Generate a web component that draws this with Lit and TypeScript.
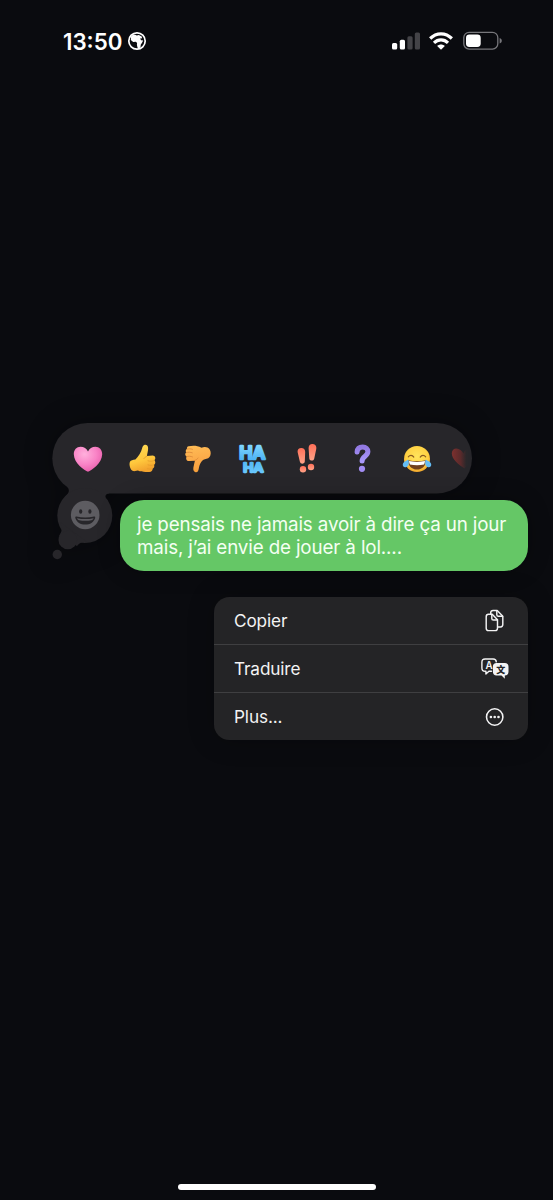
import { LitElement, html, css } from "lit";
import { customElement } from "lit/decorators.js";

const glyphs = {
  globe: html`<svg width="20" height="20" viewBox="0 0 20 20">
    <circle cx="10" cy="10" r="8.2" fill="none" stroke="#fff" stroke-width="1.7"/>
    <path fill="#fff" d="M3.500 6 6 3.500l2.200.2 1.600.8 2-.6 2.900 1.600.4 1.700-2 .3 1 1.700 2.100.3-1.300 2.600-1.100 1.400-.3 2.600-1.600 1.600-1.500-1.300-.5-2.900.2-1.600-1.300-1.200-2.600.3-2.400-2.100.2-2z"/>
  </svg>`,
  signal: html`<svg width="28" height="18" viewBox="0 0 28 18">
    <rect x="0" y="11" width="5.2" height="6.4" rx="1.5" fill="#fff"/>
    <rect x="7.8" y="7.8" width="5.2" height="9.6" rx="1.5" fill="#fff"/>
    <rect x="15.4" y="4.3" width="5.2" height="13.1" rx="1.5" fill="#434347"/>
    <rect x="22.8" y="0.4" width="5.2" height="17" rx="1.5" fill="#434347"/>
  </svg>`,
  wifi: html`<svg width="24" height="18" viewBox="0 0 25 18" preserveAspectRatio="none">
    <g fill="none" stroke="#fff" stroke-width="3.3">
      <path d="M1.2 6.5C7.6.2 17.4.2 23.8 6.5"/>
      <path d="M5.2 10.900c4.2-4 10.4-4 14.6 0"/>
    </g>
    <path fill="#fff" d="M12.5 17.8 8.500 13.900c2.300-2 5.700-2 8 0z"/>
  </svg>`,
  battery: html`<svg width="40" height="20" viewBox="0 0 40 20">
    <rect x=".8" y="1.300" width="34" height="16.800" rx="5.300" fill="none" stroke="#77777b" stroke-width="1.300"/>
    <rect x="3" y="3.500" width="14.700" height="12.400" rx="3.400" fill="#fff"/>
    <path d="M36.600 7v5.500c1.300-.5 2.200-1.500 2.200-2.750S37.900 7.500 36.600 7z" fill="#77777b"/>
  </svg>`,
  heart: html`<svg width="30" height="28" viewBox="0 0 30 28">
    <defs><radialGradient id="p" cx=".38" cy=".3" r=".75"><stop offset="0" stop-color="#ffb0dc"/><stop offset=".55" stop-color="#f983c6"/><stop offset="1" stop-color="#e85baa"/></radialGradient></defs>
    <path fill="url(#p)" d="M15 26.800C11.500 25.500 1 18.500.8 9.300.7 4.800 3.700 1.700 7.500 1.700c3.400 0 6.200 2 7.500 4.700 1.300-2.700 4.100-4.700 7.500-4.700 3.800 0 6.800 3.100 6.700 7.600C29 18.500 18.500 25.500 15 26.800z"/>
  </svg>`,
  up: html`<svg width="28" height="30" viewBox="0 0 28 30">
    <defs><linearGradient id="u" x1="0" y1="0" x2=".3" y2="1"><stop offset="0" stop-color="#ffdc57"/><stop offset=".65" stop-color="#ffc83d"/><stop offset="1" stop-color="#f3a42e"/></linearGradient></defs>
    <path fill="url(#u)" d="M15.200 1.100c1.800-.8 3.800.4 3.900 2.800.1 2.900-.8 5.400-1.200 8l5.800-.3c2.400 0 3.600 3.200 1.700 4.700 1.400 1.500 1.200 3.600-.4 4.500.8 1.700.1 3.400-1.500 3.900.2 1.900-1 3.100-3.200 3.200-4.400.2-8 .3-11.400-1.300l-2.800.5c-2.200.2-3.800-.7-4.800-3.200-1-2.600-1-5-.2-6.400.8-1.400 2.700-1.600 5.300-2.100 3.100-2.700 5.700-6.800 6.800-11.300.3-1.300 1-2.600 2-3z"/>
    <path fill="none" stroke="#e39a2a" stroke-width=".8" stroke-linecap="round" d="M19 16.800c2.100.6 4.100.6 6.200-.2M19 20.900c2 .6 4.100.6 5.900 0M18.500 24.800c1.700.5 3.400.5 5 0M17.900 12.300c-1.500.5-2.500 1.300-3 2.300"/>
  </svg>`,
  down: html`<svg width="28" height="30" viewBox="0 0 28 30">
    <defs><linearGradient id="d" x1="0" y1="0" x2=".2" y2="1"><stop offset="0" stop-color="#ffbe57"/><stop offset=".6" stop-color="#fbaa49"/><stop offset="1" stop-color="#f6a03c"/></linearGradient></defs>
    <path fill="url(#d)" d="M4.500 2.300C9 1.200 13 1.400 17.500 3.700c2-.9 4.200-1 6-.2 2.200 1 3.400 3.600 3.200 6.100-.2 3-1.600 4.800-4.200 5.200-2.300.4-4 1.200-5.300 3.200-1.600 2.300-2.100 4.600-2.500 7-.3 2.300-1.600 3.700-3.200 3.200-1.900-.5-2.500-2.300-2.100-4.700.4-2.500 1.100-4.600 1.500-6.800l-5.700.4c-2.700.1-3.900-2.700-2.400-4.600C.9 11.500.8 9.500 2.100 8.400 1.400 7 1.700 5.600 3 5c-.3-1.300.3-2.400 1.500-2.700z"/>
    <path fill="none" stroke="#d98637" stroke-width=".8" stroke-linecap="round" d="M3 5.100c2-.5 3.600-.4 5.400.2M2.300 8.600c2-.6 4.100-.5 6 .2M2.600 12.600c2-.6 4.100-.5 5.900.3M10.700 16.400c1.700-.6 2.700-1.300 3.300-2.400"/>
  </svg>`,
  haha: html`<svg width="30" height="32" viewBox="0 0 30 32">
    <defs><linearGradient id="h" gradientUnits="userSpaceOnUse" x1="0" y1="1" x2="0" y2="31"><stop offset="0" stop-color="#83d8ff"/><stop offset=".5" stop-color="#4fb4f4"/><stop offset="1" stop-color="#6cc9fd"/></linearGradient></defs>
    <g font-family="Inter, sans-serif" font-weight="500" fill="url(#h)" stroke="url(#h)" stroke-width="2.700" stroke-linejoin="round" stroke-linecap="round">
      <text x="1.200" y="16.200" font-size="17.600" textLength="26" lengthAdjust="spacingAndGlyphs">HA</text>
      <text x="5.200" y="29.200" font-size="11.800" stroke-width="2.300" textLength="20" lengthAdjust="spacingAndGlyphs">HA</text>
    </g>
  </svg>`,
  bang: html`<svg width="24" height="32" viewBox="0 0 24 32">
    <defs><linearGradient id="b" x1="0" y1="0" x2="0" y2="1"><stop offset="0" stop-color="#ff6f58"/><stop offset="1" stop-color="#ffa489"/></linearGradient></defs>
    <g fill="url(#b)">
      <path d="M1.600 9C1.300 6.500 2.900 4.900 5.300 4.900s4 1.600 3.900 4.100l-.4 9.500c-.2 2.700-4.400 2.900-4.900.2z"/>
      <circle cx="7" cy="26.300" r="3.200"/>
      <path d="M12.600 5c.1-2.700 1.800-4.200 4.300-3.900 2.500.3 3.800 2.200 3.400 4.700l-2.100 9.900c-.6 2.600-4.700 2.400-4.900-.3z"/>
      <circle cx="15" cy="24" r="3.200"/>
    </g>
  </svg>`,
  question: html`<svg width="20" height="32" viewBox="0 0 20 32">
    <defs><linearGradient id="q" x1="0" y1="0" x2="0" y2="1"><stop offset="0" stop-color="#9279e2"/><stop offset="1" stop-color="#a998fa"/></linearGradient></defs>
    <path fill="none" stroke="url(#q)" stroke-width="5" stroke-linecap="round" stroke-linejoin="round" d="M5.100 9C5.400 5.700 7.800 4.100 10.700 4.100c3.200 0 5.200 1.700 5.200 4.500 0 4.700-5.800 4.500-5.800 9.400"/>
    <circle cx="10" cy="25.800" r="3.100" fill="#a28cf3"/>
  </svg>`,
  joy: html`<svg width="30" height="28" viewBox="0 0 30 28">
    <defs><radialGradient id="j" cx=".5" cy=".4" r=".6"><stop offset="0" stop-color="#ffe45c"/><stop offset=".7" stop-color="#ffd142"/><stop offset="1" stop-color="#f0a52d"/></radialGradient></defs>
    <circle cx="15" cy="14" r="13" fill="url(#j)"/>
    <g fill="none" stroke="#8a5a20" stroke-width="1.100" stroke-linecap="round"><path d="M6.300 11.800c1.500-2 4.100-2 5.500.3M18.200 12.100c1.400-2.300 4-2.300 5.500-.3"/></g>
    <path fill="#70401c" d="M6 15.200c5.500 1.300 12.500 1.300 18 0 0 5.500-3.600 9.300-9 9.300s-9-3.800-9-9.300z"/>
    <path fill="#fff" d="M7 16.100c5 1.100 11 1.100 16 0-.1 1.300-.4 2.300-.9 3.300-4.400 1-9.800 1-14.200 0-.5-1-.8-2-.9-3.300z"/>
    <path fill="#64bdf5" d="M6.300 14.500c1.200 3.500.3 7-2.300 7.700C1.500 22.700.1 20.600 1 18.500c.8-2 3.400-2.700 5.300-4zM23.700 14.500c-1.200 3.500-.3 7 2.300 7.700 2.500.5 3.900-1.600 3-3.700-.8-2-3.400-2.700-5.300-4z"/>
  </svg>`,
  darkHeart: html`<svg width="20" height="24" viewBox="0 0 20 24">
    <defs><linearGradient id="k"><stop offset="0" stop-color="#7d302e"/><stop offset=".55" stop-color="#5a2a2b"/><stop offset=".9" stop-color="#29272a"/></linearGradient></defs>
    <path fill="url(#k)" d="M13.500 21.500C8 18 .7 12.500.8 6.300.9 3.200 3 1.300 5.500 1.400c2.800.1 5.500 2.300 7 5 .5-2 1.900-3.700 4.300-4.400v16z"/>
  </svg>`,
  copy: html`<svg width="30" height="24" viewBox="0 0 30 24">
    <g fill="none" stroke="#f3f3f4" stroke-width="1.450" stroke-linejoin="round" stroke-linecap="round">
      <path d="M7.500 5.300h3.700l5.300 5.500v8.400c0 1.600-.8 2.400-2.300 2.400H7.500c-1.500 0-2.300-.8-2.300-2.400V7.700c0-1.600.8-2.400 2.300-2.400z"/>
      <path d="M10.800 5.500v3.900c0 1.100.5 1.600 1.600 1.600h3.900"/>
      <path d="M9.700 4.900V3.800c0-1.500.8-2.300 2.300-2.300h4.200l5.600 5.700v8.300c0 1.600-.8 2.400-2.300 2.400h-2.700"/>
      <path d="M15.800 1.800v3.900c0 1.100.5 1.600 1.600 1.600h4.100"/>
    </g>
  </svg>`,
  translate: html`<svg width="30" height="24" viewBox="0 -.6 30 24">
    <path fill="none" stroke="#f3f3f4" stroke-width="1.400" stroke-linejoin="round" stroke-linecap="round" d="M15.300 4.300c-.1-1.900-1.100-2.900-3.200-2.900H4.100C1.900 1.400.9 2.500.9 4.700v5.700c0 2.200 1 3.300 3.200 3.300h.8v2.700l3-2.700h2.600"/>
    <text x="8" y="11.200" text-anchor="middle" font-family="Inter, sans-serif" font-size="9.800" font-weight="600" fill="#f3f3f4">A</text>
    <path fill="#f3f3f4" d="M15.600 5.500h8.200c2.400 0 3.700 1.300 3.700 3.700v5c0 2.400-1.300 3.700-3.700 3.700v3.300L20.500 17.900h-4.900c-2.400 0-3.700-1.300-3.700-3.700v-5c0-2.400 1.300-3.700 3.700-3.700z"/>
    <text x="19.700" y="15.200" text-anchor="middle" font-family="'Noto Sans CJK SC', sans-serif" font-size="9" font-weight="900" fill="#242426">文</text>
  </svg>`,
  more: html`<svg width="30" height="24" viewBox="0 0 30 24">
    <circle cx="13.700" cy="12" r="8.200" fill="none" stroke="#f3f3f4" stroke-width="1.550"/>
    <g fill="#f3f3f4"><circle cx="9.900" cy="12" r="1.300"/><circle cx="13.700" cy="12" r="1.300"/><circle cx="17.500" cy="12" r="1.300"/></g>
  </svg>`,
};

@customElement("status-bar")
class StatusBar extends LitElement {
  static styles = css`
    :host { display: flex; height: 82px; box-sizing: border-box; padding: 0 50px 0 63px; align-items: center; justify-content: space-between; }
    .side { display: flex; align-items: center; }
    .time { font-size: 22.3px; font-weight: 580; letter-spacing: 0; margin-right: 5px; }
    .right { gap: 9px; }
    .battery { margin-left: 1px; }
    svg { display: block; }
  `;
  render() {
    return html`<div class="side"><span class="time">13:50</span>${glyphs.globe}</div>
      <div class="side right">${glyphs.signal}${glyphs.wifi}<span class="battery">${glyphs.battery}</span></div>`;
  }
}

@customElement("reaction-picker")
class ReactionPicker extends LitElement {
  static styles = css`
    :host { display: block; position: relative; width: 420px; height: 71px; }
    .cloud { position: absolute; left: -2px; top: 0; overflow: visible; filter: drop-shadow(0 0 14px rgba(0,0,0,.3)); }
    .row { position: relative; height: 71px; box-sizing: border-box; display: grid; grid-template-columns: repeat(7, 54.900px) 26px; padding-left: 8.500px; align-items: center; overflow: hidden; }
    .cell { display: grid; place-items: center; }
    .cell:last-child { justify-items: end; }
    .cell svg { display: block; }
  `;
  render() {
    const list = [glyphs.heart, glyphs.up, glyphs.down, glyphs.haha, glyphs.bang, glyphs.question, glyphs.joy, glyphs.darkHeart];
    return html`<svg class="cloud" width="424" height="142" viewBox="0 0 424 142">
        <g fill="#27262a">
          <rect x="2.300" y="0" width="419.700" height="70.500" rx="35.250"/>
          <path d="M16 62c4 5 4 7-1 12l15 4h28c-4-4-3-7 1-7.500V62z"/>
          <circle cx="34.800" cy="92.500" r="27.500"/>
          <path d="M10 99c3 7 2 9-1 14l18 10c3-4 6-4 10-4z"/>
          <circle cx="17.800" cy="117" r="9.300"/>
          <circle cx="7.300" cy="131.500" r="4.700"/>
        </g>
        <circle cx="35.200" cy="92" r="14.300" fill="#5d5c61"/>
        <g fill="#27262a">
          <ellipse cx="30.700" cy="88.500" rx="1.600" ry="2.300"/><ellipse cx="39.900" cy="88.500" rx="1.600" ry="2.300"/>
          <path d="M26.500 93.500c5.500 1.400 12 1.400 17.500 0 .9 0 1.400.5 1.200 1.400-1.400 4.300-5.200 6.600-9.900 6.600s-8.700-2.300-10-6.600c-.2-.9.300-1.400 1.200-1.400z"/>
        </g>
        <path fill="#5d5c61" d="M27 95.200c5.300 1.200 11.200 1.200 16.600 0-.5 1.200-1.100 1.700-2.200 2-4 .8-8.300.8-12.200 0-1.100-.3-1.700-.8-2.200-2z"/>
      </svg>
      <div class="row">${list.map((g) => html`<span class="cell">${g}</span>`)}</div>`;
  }
}

@customElement("context-menu")
class ContextMenu extends LitElement {
  static styles = css`
    :host { display: block; width: 314px; height: 144px; border-radius: 15.500px; background: #242426; overflow: hidden; }
    .item { display: flex; height: 48px; box-sizing: border-box; padding: 0 17px 0 20px; align-items: center; justify-content: space-between; font-size: 17.200px; letter-spacing: -0.120px; color: #f3f3f4; }
    .item:first-child { height: 47px; }
    .item + .item { border-top: 1px solid #3f3f41; }
    svg { display: block; }
  `;
  render() {
    return html`<div class="item"><span>Copier</span>${glyphs.copy}</div>
      <div class="item"><span>Traduire</span>${glyphs.translate}</div>
      <div class="item"><span>Plus...</span>${glyphs.more}</div>`;
  }
}

@customElement("app-root")
class AppRoot extends LitElement {
  static styles = css`
    :host { display: flex; flex-direction: column; height: 1200px; background: #0a0b0f; color: #fff; font-family: Inter, "Noto Sans", sans-serif; overflow: hidden; }
    .picker { margin: 341px 0 0 52px; }
    .bubble { position: relative; margin: 6px 25px 0 120px; height: 71px; box-sizing: border-box; padding: 12.500px 0 0 17px; border-radius: 24px; background: #65c766; font-size: 18.800px; line-height: 23.200px; letter-spacing: -0.140px; color: #f4fff2; white-space: nowrap; box-shadow: 0 0 22px rgba(0,0,0,.3); }
    .line { display: block; }
    .menu { margin: 26px 0 0 214px; height: 143px; box-shadow: 0 0 26px rgba(0,0,0,.25); }
    .home { width: 198px; height: 6.500px; border-radius: 4px; background: #fff; margin: auto auto 10px 178px; }
  `;
  render() {
    return html`<status-bar></status-bar>
      <reaction-picker class="picker"></reaction-picker>
      <div class="bubble"><span class="line">je pensais ne jamais avoir à dire ça un jour</span><span class="line">mais, j’ai envie de jouer à lol....</span></div>
      <context-menu class="menu"></context-menu>
      <div class="home"></div>`;
  }
}
